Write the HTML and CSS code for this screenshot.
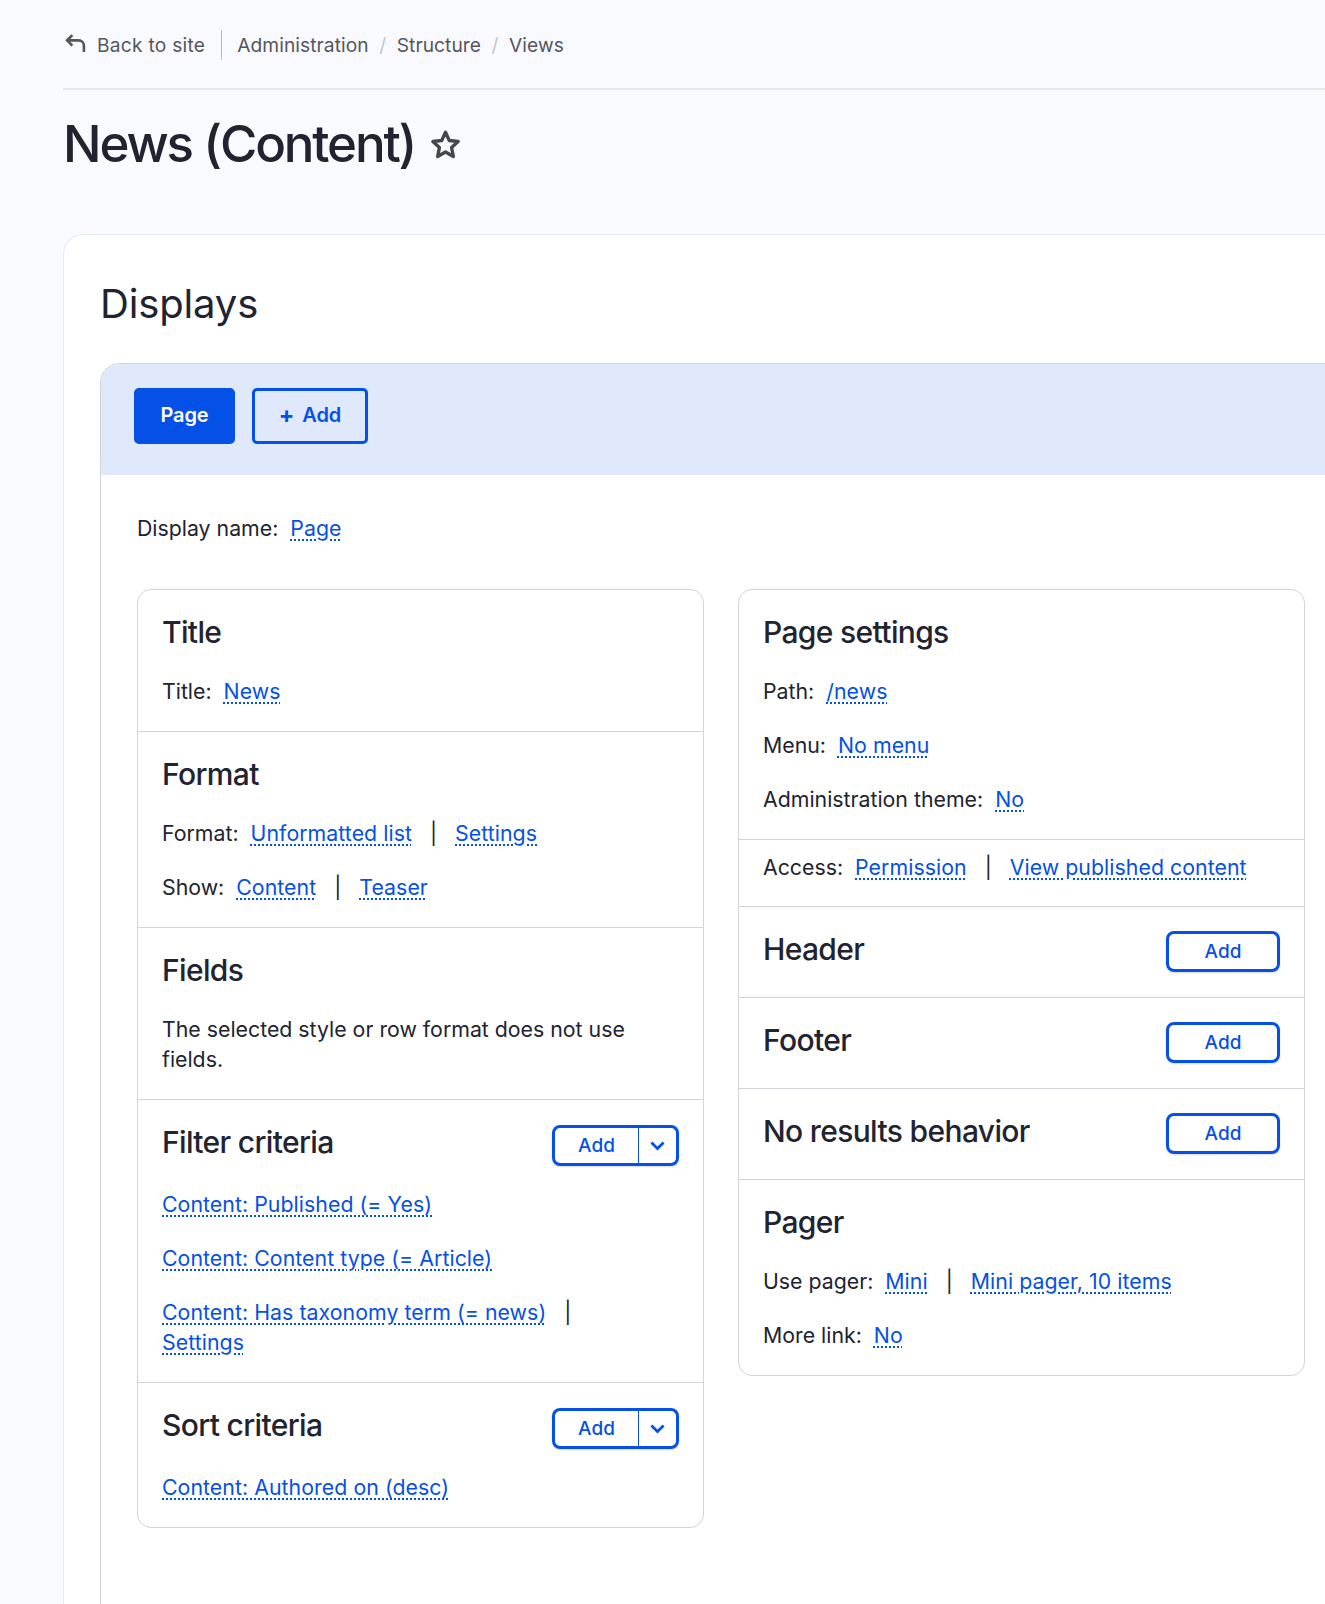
FILE: index.html
```html
<!DOCTYPE html>
<html lang="en">
<head>
  <meta charset="UTF-8">
  <meta name="viewport" content="width=device-width, initial-scale=1.0">
  <title>News (Content)</title>
  <link rel="stylesheet" href="styles.css">
</head>
<body>
  <div class="page">
    <nav class="breadcrumb">
      <a class="back-link" href="#">
        <svg class="back-icon" viewBox="0 0 20 18" aria-hidden="true"><path d="M7 1 2 6l5 5M2 6h11a5 5 0 0 1 5 5v6"/></svg>
        Back to site
      </a>
      <ol class="crumbs">
        <li><a href="#">Administration</a></li>
        <li><a href="#">Structure</a></li>
        <li><a href="#">Views</a></li>
      </ol>
    </nav>

    <div class="page-title">
      <h1>News (Content)</h1>
      <svg class="star-icon" viewBox="0 0 24 24" aria-hidden="true"><path d="M12 2.5l2.9 6.4 6.9.8-5.1 4.7 1.4 6.9-6.1-3.5-6.1 3.5 1.4-6.9-5.1-4.7 6.9-.8z"/></svg>
    </div>

    <main class="card">
      <h2 class="card-title">Displays</h2>
      <div class="displays">
        <div class="tabs">
          <a class="btn btn-solid" href="#">Page</a>
          <a class="btn btn-plain" href="#"><span class="plus">+</span> Add</a>
        </div>
        <div class="display-body">
          <p class="display-name">Display name: <a href="#">Page</a></p>
          <div class="columns">
            <div class="box">
              <section class="section">
                <h3>Title</h3>
                <p class="row">Title: <a href="#">News</a></p>
              </section>
              <section class="section">
                <h3>Format</h3>
                <p class="row">Format: <a href="#">Unformatted list</a><span class="pipe">|</span><a href="#">Settings</a></p>
                <p class="row">Show: <a href="#">Content</a><span class="pipe">|</span><a href="#">Teaser</a></p>
              </section>
              <section class="section">
                <h3>Fields</h3>
                <p class="row">The selected style or row format does not use fields.</p>
              </section>
              <section class="section">
                <div class="section-head">
                  <h3>Filter criteria</h3>
                  <div class="split">
                    <a class="split-main" href="#">Add</a>
                    <a class="split-toggle" href="#"><svg viewBox="0 0 14 14" aria-hidden="true"><path d="M2 4.5l5 5 5-5"/></svg></a>
                  </div>
                </div>
                <p class="row row-links"><a href="#">Content: Published (= Yes)</a></p>
                <p class="row row-links"><a href="#">Content: Content type (= Article)</a></p>
                <p class="row row-links"><a href="#">Content: Has taxonomy term (= news)</a><span class="pipe">|</span><br><a href="#">Settings</a></p>
              </section>
              <section class="section">
                <div class="section-head">
                  <h3>Sort criteria</h3>
                  <div class="split">
                    <a class="split-main" href="#">Add</a>
                    <a class="split-toggle" href="#"><svg viewBox="0 0 14 14" aria-hidden="true"><path d="M2 4.5l5 5 5-5"/></svg></a>
                  </div>
                </div>
                <p class="row row-links"><a href="#">Content: Authored on (desc)</a></p>
              </section>
            </div>

            <div class="box">
              <section class="section">
                <h3>Page settings</h3>
                <p class="row">Path: <a href="#">/news</a></p>
                <p class="row">Menu: <a href="#">No menu</a></p>
                <p class="row">Administration theme: <a href="#">No</a></p>
              </section>
              <section class="section section-access">
                <p class="row">Access: <a href="#">Permission</a><span class="pipe">|</span><a href="#">View published content</a></p>
              </section>
              <section class="section">
                <div class="section-head">
                  <h3>Header</h3>
                  <a class="btn-small" href="#">Add</a>
                </div>
              </section>
              <section class="section">
                <div class="section-head">
                  <h3>Footer</h3>
                  <a class="btn-small" href="#">Add</a>
                </div>
              </section>
              <section class="section">
                <div class="section-head">
                  <h3>No results behavior</h3>
                  <a class="btn-small" href="#">Add</a>
                </div>
              </section>
              <section class="section">
                <h3>Pager</h3>
                <p class="row">Use pager: <a href="#">Mini</a><span class="pipe">|</span><a href="#">Mini pager, 10 items</a></p>
                <p class="row">More link: <a href="#">No</a></p>
              </section>
            </div>
          </div>
        </div>
      </div>
    </main>
  </div>
</body>
</html>
```

FILE: styles.css
```css
:root {
  --primary-color: #0550e6;
  --text-color: #222330;
  --muted-color: #55565b;
  --border-color: #d3d4d9;
  --background-color: #f9faff;
}

* {
  box-sizing: border-box;
  margin: 0;
  padding: 0;
}

html, body {
  height: 1604px;
  overflow: hidden;
}

body {
  background-color: var(--background-color);
  color: var(--text-color);
  font-family: Inter, "Liberation Sans", sans-serif;
  font-size: 21.3px;
  line-height: 30px;
}

a {
  color: var(--primary-color);
}

.page {
  padding-left: 63px;
}

/* breadcrumb */
.breadcrumb {
  display: flex;
  align-items: center;
  height: 90px;
  padding-top: 2px;
  border-bottom: 2px solid #e6e7ec;
  font-size: 19.2px;
}

.back-link {
  display: flex;
  align-items: center;
  gap: 11px;
  height: 30px;
  padding-right: 16px;
  border-right: 1px solid #b9bac0;
  color: var(--muted-color);
  text-decoration: none;
  letter-spacing: 0.25px;
}

.back-icon {
  width: 21px;
  height: 19px;
  margin: -3px 0 0 2px;
  fill: none;
  stroke: var(--muted-color);
  stroke-width: 2.5;
}

.crumbs {
  display: flex;
  list-style: none;
  margin-left: 15px;
  letter-spacing: 0.06px;
}

.crumbs a {
  color: var(--muted-color);
  text-decoration: none;
}

.crumbs li + li::before {
  content: "/";
  margin: 0 10.5px;
  color: #c4c5ca;
}

/* title */
.page-title {
  display: flex;
  align-items: center;
  gap: 15px;
  height: 144px;
  padding-bottom: 37px;
}

h1 {
  font-size: 51px;
  line-height: 60px;
  font-weight: 500;
  letter-spacing: -2.15px;
}

.star-icon {
  width: 31px;
  height: 31px;
  margin-top: 2px;
  fill: none;
  stroke: #46474d;
  stroke-width: 2.6;
  stroke-linejoin: round;
}

/* card */
.card {
  background: #fff;
  border: 1px solid #e9eaef;
  border-width: 1px 0 0 1px;
  border-radius: 20px 0 0 0;
  padding: 38px 0 0 36px;
  height: 1400px;
}

.card-title {
  font-size: 40px;
  line-height: 62px;
  font-weight: 400;
  letter-spacing: -0.15px;
  margin-bottom: 28px;
}

.displays {
  height: 1300px;
  border: 1px solid var(--border-color);
  border-width: 1px 0 0 1px;
  border-radius: 20px 0 0 0;
}

.tabs {
  display: flex;
  gap: 17px;
  height: 111px;
  padding: 24px 33px;
  background: #e0e8fb;
  border-top-left-radius: 20px;
}

.btn {
  display: flex;
  align-items: center;
  justify-content: center;
  height: 56px;
  padding-bottom: 2px;
  font-weight: 600;
  text-decoration: none;
  font-size: 20px;
  letter-spacing: -0.1px;
  border-radius: 5px;
  border: 3px solid var(--primary-color);
}

.btn-solid {
  width: 101px;
  background: var(--primary-color);
  color: #fff;
}

.btn-plain {
  width: 116px;
  color: var(--primary-color);
}

.plus {
  margin-right: 8px;
  font-size: 23px;
  font-weight: 700;
}

.display-body {
  padding: 38px 0 0 36px;
}

.display-name {
  margin-bottom: 46px;
}

.display-name a,
.row a {
  margin-left: 6px;
  letter-spacing: 0.05px;
  text-decoration: underline dotted 2px;
  text-underline-offset: 3px;
}

.row-links a,
.pipe + a {
  margin-left: 0;
}

.columns {
  display: grid;
  grid-template-columns: 567px 567px;
  gap: 34px;
  align-items: start;
}

.box {
  border: 1px solid var(--border-color);
  border-radius: 14px;
}

.section {
  padding: 22px 24px 25px;
  border-bottom: 1px solid var(--border-color);
}

.section:last-child {
  border-bottom: 0;
}

.section-access {
  padding: 12px 24px 24px;
}

.section-access .row {
  margin-top: 0;
}

h3 {
  font-size: 30px;
  line-height: 40px;
  font-weight: 500;
  letter-spacing: -0.65px;
}

.section-head {
  display: flex;
  justify-content: space-between;
  align-items: flex-start;
}

.row {
  margin-top: 24px;
}

.section-head + .row {
  margin-top: 23px;
}

.pipe {
  margin: 0 18px;
  color: var(--text-color);
}

.split {
  display: flex;
  width: 127px;
  height: 41px;
  margin-top: 3px;
  border: 3px solid var(--primary-color);
  border-radius: 8px;
  font-size: 19px;
  font-weight: 500;
  box-shadow: 0 1px 2px rgba(0, 0, 0, 0.15);
}

.split-main {
  display: flex;
  align-items: center;
  justify-content: center;
  flex: 1;
  text-decoration: none;
  border-right: 1px solid var(--primary-color);
}

.split-toggle {
  display: flex;
  align-items: center;
  justify-content: center;
  width: 37px;
}

.split-toggle svg {
  width: 17px;
  height: 17px;
  margin-left: -1px;
  fill: none;
  stroke: var(--primary-color);
  stroke-width: 2.2;
}

.btn-small {
  display: flex;
  align-items: center;
  justify-content: center;
  width: 114px;
  height: 41px;
  margin-top: 2px;
  border: 3px solid var(--primary-color);
  border-radius: 8px;
  font-size: 19px;
  font-weight: 500;
  text-decoration: none;
  box-shadow: 0 1px 2px rgba(0, 0, 0, 0.15);
}
```
